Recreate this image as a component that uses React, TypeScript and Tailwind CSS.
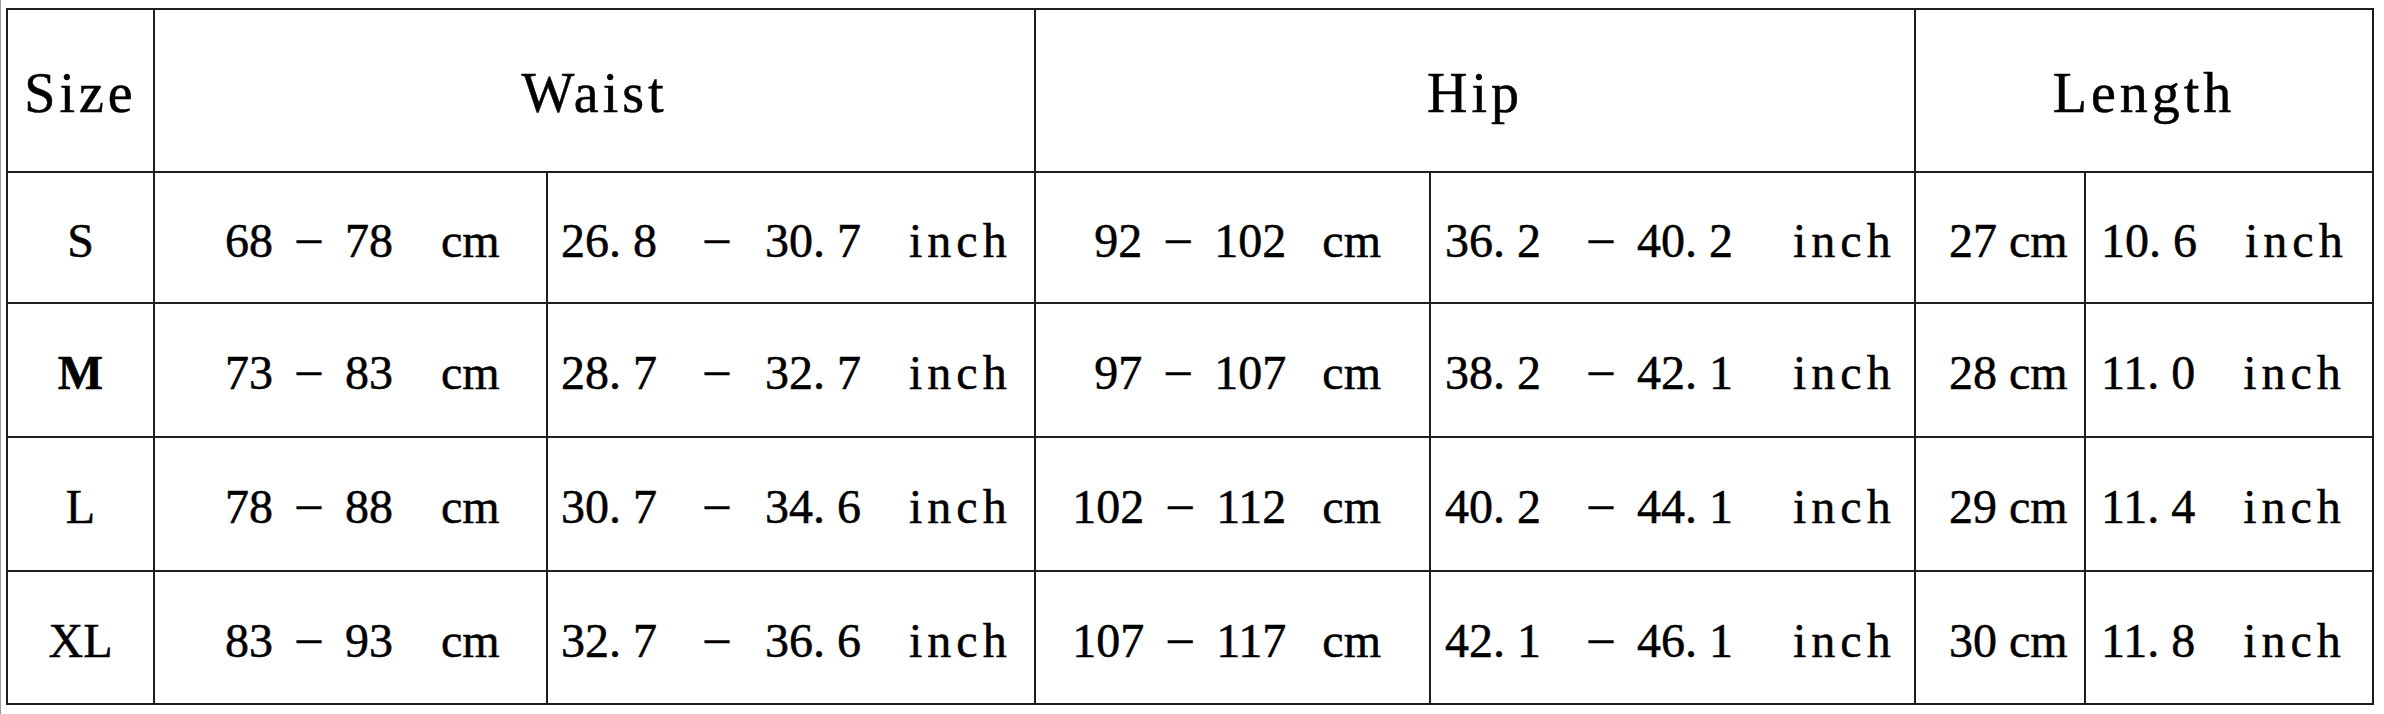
const rows = [
  {
    size: "S",
    waistCm: "68  –  78    cm",
    waistIn: "26. 8    –   30. 7    inch",
    hipCm: "92  –  102   cm",
    hipIn: "36. 2    –  40. 2     inch",
    lenCm: "27 cm",
    lenIn: "10. 6    inch",
  },
  {
    size: "M",
    waistCm: "73  –  83    cm",
    waistIn: "28. 7    –   32. 7    inch",
    hipCm: "97  –  107   cm",
    hipIn: "38. 2    –  42. 1     inch",
    lenCm: "28 cm",
    lenIn: "11. 0    inch",
  },
  {
    size: "L",
    waistCm: "78  –  88    cm",
    waistIn: "30. 7    –   34. 6    inch",
    hipCm: "102  –  112   cm",
    hipIn: "40. 2    –  44. 1     inch",
    lenCm: "29 cm",
    lenIn: "11. 4    inch",
  },
  {
    size: "XL",
    waistCm: "83  –  93    cm",
    waistIn: "32. 7    –   36. 6    inch",
    hipCm: "107  –  117   cm",
    hipIn: "42. 1    –  46. 1     inch",
    lenCm: "30 cm",
    lenIn: "11. 8    inch",
  },
];

const head =
  "flex items-center justify-center bg-white pt-[5px] text-[56px] leading-none tracking-[4px] [-webkit-text-stroke:0.5px_black]";
const cell =
  "flex items-center bg-white pt-[6px] text-[48px] leading-none whitespace-pre [-webkit-text-stroke:0.5px_black]";

// dash sits a bit higher in the original font, and "inch" is set wider
function Value({ text }: { text: string }) {
  const parts = text.split("–");
  const last = parts[parts.length - 1];
  const unit = last.match(/(inch|cm)$/)?.[1] ?? "";
  const tail = last.slice(0, last.length - unit.length);
  return (
    <span>
      {parts.length > 1 && (
        <>
          {parts[0]}
          <span className="inline-block -translate-y-[4px]">–</span>
        </>
      )}
      {tail}
      <span className={unit === "inch" ? "tracking-[5px]" : ""}>{unit}</span>
    </span>
  );
}

export default function App() {
  return (
    <div className="h-[714px] w-[2384px] overflow-hidden bg-white border-l border-[#9a9a9a]">
      <div className="ml-[5px] mt-[8px] grid w-[2368px] grid-cols-[145px_391px_486px_393px_483px_168px_286px] grid-rows-[161px_129px_132px_132px_131px] gap-[2px] bg-[#1e1e1e] p-[2px] font-['Liberation_Serif','Times_New_Roman',serif] text-black">
        <div className={head}>Size</div>
        <div className={`${head} col-span-2`}>Waist</div>
        <div className={`${head} col-span-2`}>Hip</div>
        <div className={`${head} col-span-2 tracking-[3px]`}>Length</div>

        {rows.map((r) => (
          <div key={r.size} className="contents">
            <div className={`${cell} justify-center ${r.size === "M" ? "font-bold" : ""}`}>{r.size}</div>
            <div className={`${cell} pl-[70px]`}>
              <Value text={r.waistCm} />
            </div>
            <div className={`${cell} pl-[13px]`}>
              <Value text={r.waistIn} />
            </div>
            <div className={`${cell} justify-end pr-[48px]`}>
              <Value text={r.hipCm} />
            </div>
            <div className={`${cell} pl-[14px]`}>
              <Value text={r.hipIn} />
            </div>
            <div className={`${cell} pl-[33px]`}>
              <Value text={r.lenCm} />
            </div>
            <div className={`${cell} pl-[15px]`}>
              <Value text={r.lenIn} />
            </div>
          </div>
        ))}
      </div>
    </div>
  );
}
